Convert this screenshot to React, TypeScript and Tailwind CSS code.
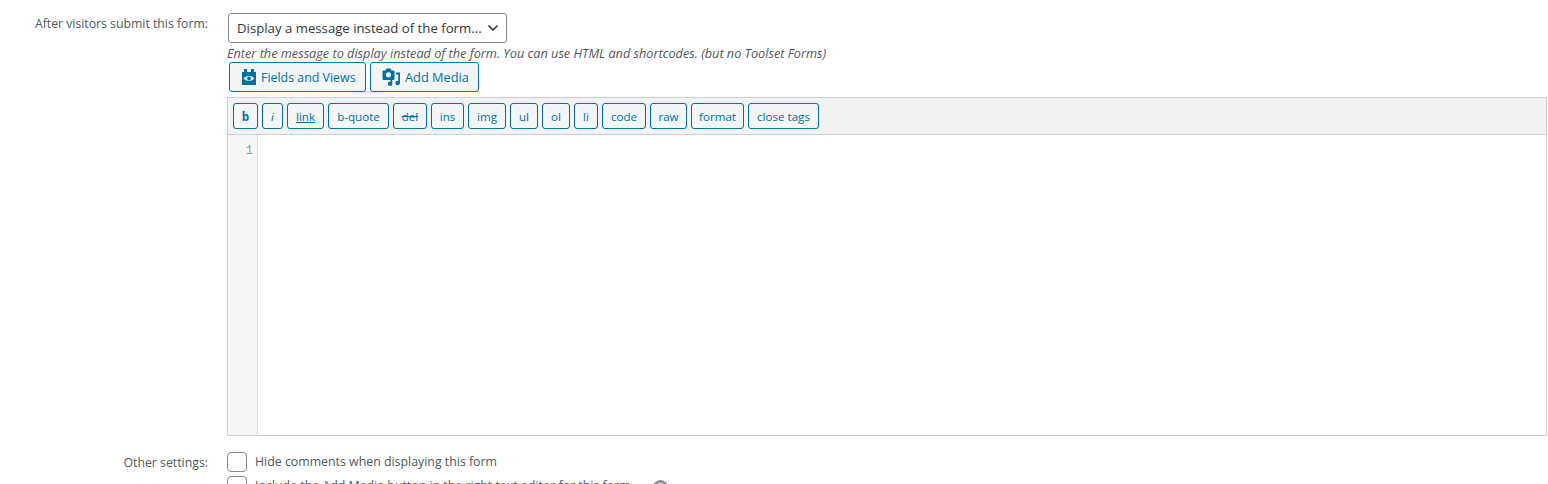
import React from 'react';
import { ChevronDown } from 'lucide-react';

const font = "font-['Segoe_UI','Open_Sans','Noto_Sans',sans-serif]";

const quicktags = [
  { label: 'b', w: 'w-[25px]', cls: 'font-bold' },
  { label: 'i', w: 'w-[21px]', cls: 'italic' },
  { label: 'link', w: 'w-[37px]', cls: 'underline' },
  { label: 'b-quote', w: 'w-[61px]', cls: '' },
  { label: 'del', w: 'w-[34px]', cls: 'line-through' },
  { label: 'ins', w: 'w-[33px]', cls: '' },
  { label: 'img', w: 'w-[38px]', cls: '' },
  { label: 'ul', w: 'w-[28px]', cls: '' },
  { label: 'ol', w: 'w-[28px]', cls: '' },
  { label: 'li', w: 'w-[24px]', cls: '' },
  { label: 'code', w: 'w-[44px]', cls: '' },
  { label: 'raw', w: 'w-[37px]', cls: '' },
  { label: 'format', w: 'w-[53px]', cls: '' },
  { label: 'close tags', w: 'w-[71px]', cls: '' },
];

const FieldsIcon = () => (
  <svg width="14" height="16" viewBox="0 0 14 16" className="shrink-0">
    <rect x="0" y="3" width="14" height="13" fill="#0071a1" />
    <rect x="2" y="0" width="3" height="4" fill="#0071a1" />
    <rect x="9" y="0" width="3" height="4" fill="#0071a1" />
    <path d="M1.5 9.5 C4 6.2 10 6.2 12.5 9.5 C10 12.8 4 12.8 1.5 9.5 Z" fill="#f3f5f6" />
    <circle cx="7" cy="9.5" r="1.9" fill="#0071a1" />
  </svg>
);

const MediaIcon = () => (
  <svg width="18" height="18" viewBox="0 0 18 18" className="shrink-0">
    <path d="M1.5 2.5 H3.5 L4.5 0.5 H8.5 L9.5 2.5 H11.5 Q12.5 2.5 12.5 3.5 V11 Q12.5 12 11.5 12 H1.5 Q0.5 12 0.5 11 V3.5 Q0.5 2.5 1.5 2.5 Z" fill="#0071a1" />
    <circle cx="6.5" cy="6.8" r="2.6" fill="#f3f5f6" />
    <path d="M14 4.5 H18 V15 H16.3 V6.5 H14 Z" fill="#0071a1" />
    <circle cx="15.6" cy="15" r="2.2" fill="#0071a1" />
    <path d="M8.5 11.5 H10.3 V16 H8.5 Z" fill="#0071a1" />
    <circle cx="8" cy="15.8" r="2.2" fill="#0071a1" />
  </svg>
);

export default function App() {
  return (
    <div className={`${font} h-[484px] w-[1548px] overflow-hidden bg-white text-[12px] text-[#50575e]`}>
      <div className="flex pt-[13px]">
        <div className="w-[208px] shrink-0 pt-[2px] text-right text-[12.25px] leading-[17px]">After visitors submit this form:</div>
        <div className="ml-[19px] w-[1320px] shrink-0">
          {/* Action select */}
          <div className="ml-px flex h-[30px] w-[279px] items-center justify-between rounded-[3px] border border-[#7e8993] bg-white pl-2 pr-[5px] text-[13.2px] text-[#32373c]">
            <span className="whitespace-nowrap pt-px">Display a message instead of the form...</span>
            <ChevronDown className="h-4 w-4 shrink-0 text-[#32373c]" strokeWidth={2.6} />
          </div>
          <p className="mt-px h-[18px] whitespace-nowrap text-[12.7px] italic leading-[18px] text-[#50575e]">
            Enter the message to display instead of the form. You can use HTML and shortcodes. (but no Toolset Forms)
          </p>

          {/* Editor buttons */}
          <div className="ml-[2px] flex gap-1">
            <button className="flex h-[30px] w-[137px] items-center justify-start gap-[5px] rounded-[3px] border border-[#0071a1] bg-[#f3f5f6] pl-[12px] text-[12.4px] text-[#0071a1]">
              <FieldsIcon />
              <span className="pt-[2px]">Fields and Views</span>
            </button>
            <button className="flex h-[30px] w-[109px] items-center justify-start gap-[5px] rounded-[3px] border border-[#0071a1] bg-[#f3f5f6] pl-[11px] text-[12.8px] text-[#0071a1]">
              <MediaIcon />
              <span className="pt-px">Add Media</span>
            </button>
          </div>

          {/* Quicktags toolbar */}
          <div className="mt-[5px] flex h-[38px] items-center gap-1 border border-[#ccd0d4] bg-[#f3f3f3] pl-[5px]">
            {quicktags.map((t) => (
              <button
                key={t.label}
                className={`flex h-[26px] items-center justify-center rounded-[3px] border border-[#0071a1] bg-[#f3f5f6] pt-px text-[11.6px] text-[#0071a1] ${t.w} ${t.cls}`}
              >
                {t.label}
              </button>
            ))}
          </div>

          {/* Code area */}
          <div className="flex h-[301px] border border-t-0 border-[#ccd0d4] bg-white">
            <div className="w-[30px] border-r border-[#dddddd] bg-[#f7f7f7] pr-1 pt-[8px] text-right font-['Liberation_Mono',monospace] text-[12px] leading-[16px] text-[#999999]">
              1
            </div>
            <div className="flex-1" />
          </div>
        </div>
      </div>

      {/* Other settings */}
      <div className="mt-[16px] flex">
        <div className="w-[208px] shrink-0 pt-[2px] text-right text-[12.3px] leading-[17px]">Other settings:</div>
        <div className="ml-[19px] flex flex-col gap-[4px]">
          <div className="flex h-5 items-center gap-2">
            <span className="h-5 w-5 rounded-[4px] border border-[#7e8993] bg-white" />
            <span className="pt-px text-[12.35px]">Hide comments when displaying this form</span>
          </div>
          <div className="flex h-5 items-center gap-2">
            <span className="h-5 w-5 rounded-[4px] border border-[#7e8993] bg-white" />
            <span className="pt-px text-[12.35px]">Include the Add Media button in the right text editor for this form</span>
            <span className="ml-[14px] h-[15px] w-[15px] translate-y-px shrink-0 rounded-full border-[3px] border-[#8c8f94]" />
          </div>
        </div>
      </div>
    </div>
  );
}
